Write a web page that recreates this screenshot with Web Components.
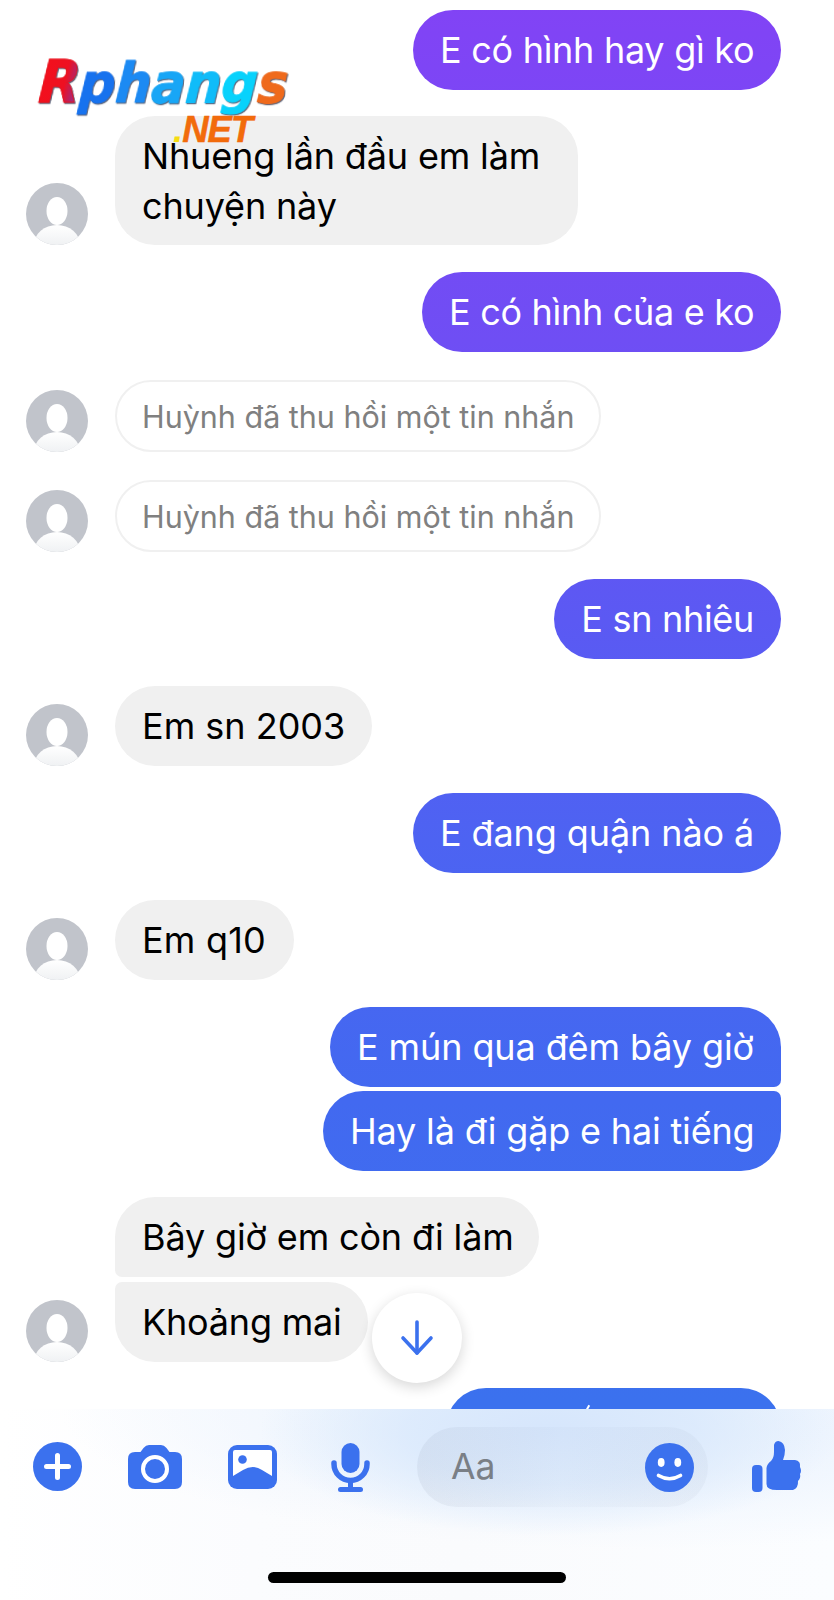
<!DOCTYPE html>
<html lang="vi">
<head>
<meta charset="utf-8">
<title>Messenger</title>
<style>
html,body{margin:0;padding:0;background:#fff}
body{width:834px;height:1600px;overflow:hidden;font-family:Inter,"Noto Sans",sans-serif}
</style>
</head>
<body>
<chat-screen>
  <chat-row side="out" top="10"><chat-bubble kind="out" w="368" ls="-.28">E có hình hay gì ko</chat-bubble></chat-row>
  <chat-row side="in" top="26" avatar><chat-bubble kind="in" w="463" style="padding-bottom:14px">Nhueng lần đầu em làm<br>chuyện này</chat-bubble></chat-row>
  <chat-row side="out" top="27"><chat-bubble kind="out" w="359" ls="-.3">E có hình của e ko</chat-bubble></chat-row>
  <chat-row side="in" top="28" avatar><chat-bubble kind="sys">Huỳnh đã thu hồi một tin nhắn</chat-bubble></chat-row>
  <chat-row side="in" top="28" avatar><chat-bubble kind="sys">Huỳnh đã thu hồi một tin nhắn</chat-bubble></chat-row>
  <chat-row side="out" top="27"><chat-bubble kind="out" w="227" ls="-.3">E sn nhiêu</chat-bubble></chat-row>
  <chat-row side="in" top="27" avatar><chat-bubble kind="in" w="257" ls="0">Em sn 2003</chat-bubble></chat-row>
  <chat-row side="out" top="27"><chat-bubble kind="out" w="368" ls="-.1">E đang quận nào á</chat-bubble></chat-row>
  <chat-row side="in" top="27" avatar><chat-bubble kind="in" w="179" ls=".2">Em q10</chat-bubble></chat-row>
  <chat-row side="out" top="26.5"><chat-bubble kind="out" w="451" corner="br" ls="-.1">E mún qua đêm bây giờ</chat-bubble></chat-row>
  <chat-row side="out" top="4.5"><chat-bubble kind="out" w="458" corner="tr" ls="-.17">Hay là đi gặp e hai tiếng</chat-bubble></chat-row>
  <chat-row side="in" top="26" spacer><chat-bubble kind="in" w="424" corner="bl" ls="-.15">Bây giờ em còn đi làm</chat-bubble></chat-row>
  <chat-row side="in" top="5" avatar><chat-bubble kind="in" w="253" corner="tl" ls="-.2">Khoảng mai</chat-bubble></chat-row>
  <chat-row side="out" top="26"><chat-bubble kind="out" w="335" tick></chat-bubble></chat-row>
  <scroll-button slot="over"></scroll-button>
  <site-logo slot="over"></site-logo>
  <chat-composer slot="over"></chat-composer>
</chat-screen>

<script>
function define(name, css, html, setup){
  customElements.define(name, class extends HTMLElement{
    constructor(){
      super();
      this.attachShadow({mode:'open'}).innerHTML = '<style>'+css+'</style>'+html;
    }
    connectedCallback(){ if(setup) setup(this, this.shadowRoot); }
  });
}

define('chat-screen',
  ':host{display:block;position:relative;width:834px;height:1600px;overflow:hidden;background:#fff}'+
  '.list{display:flex;flex-direction:column}',
  '<div class="list"><slot></slot></div><slot name="over"></slot>');

define('chat-row',
  ':host{display:flex;align-items:flex-end;flex:none}'+
  ':host([side=out]){justify-content:flex-end;padding-right:53px}'+
  ':host([side=in]){justify-content:flex-start;padding-left:26px}'+
  '.slot{flex:none;width:62px;margin-right:27px;display:none}'+
  ':host([avatar]) .slot,:host([spacer]) .slot{display:block}',
  '<div class="slot"></div><slot></slot>',
  function(h, s){
    h.style.marginTop = (h.getAttribute('top')||0)+'px';
    if(h.hasAttribute('avatar')){
      s.querySelector('.slot').appendChild(document.createElement('chat-avatar'));
    }
  });

define('chat-avatar',
  ':host{display:block;width:62px;height:62px}svg{display:block}',
  '<svg width="62" height="62" viewBox="0 0 62 62"><defs><linearGradient id="b" x1="0" y1="0" x2="0" y2="1"><stop offset="0" stop-color="#fff"/><stop offset=".55" stop-color="#eef0f2"/><stop offset="1" stop-color="#e6e8eb"/></linearGradient><clipPath id="c"><circle cx="31" cy="31" r="31"/></clipPath></defs><g clip-path="url(#c)"><rect width="62" height="62" fill="#c1c4cb"/><ellipse cx="31" cy="28" rx="10.500" ry="14" fill="#fff"/><ellipse cx="31" cy="62" rx="23" ry="20" fill="url(#b)"/></g></svg>');

define('chat-bubble',
  ':host{display:block;box-sizing:border-box;flex:none;padding:15px 27px;border-radius:40px;font:400 36px/50px Inter,"Noto Sans",sans-serif;letter-spacing:-.15px;white-space:nowrap}'+
  ':host([kind=out]){color:#fff;text-align:right;background:linear-gradient(180deg,#8243f5 0,#7c46f5 100px,#6f4ef4 340px,#5b59f3 620px,#4d63f2 840px,#4269f0 1100px,#3b71ee 1400px) fixed}'+
  ':host([kind=in]){color:#000;background:#f0f0f0}'+
  ':host([kind=sys]){color:#808080;background:#fff;border:2px solid #f0f0f0;width:486px;height:72px;padding:0 0 0 25px;border-radius:36px;font-size:30.5px;line-height:70px;letter-spacing:0}'+
  ':host([corner=br]){border-bottom-right-radius:7px}'+
  ':host([corner=tr]){border-top-right-radius:7px}'+
  ':host([corner=bl]){border-bottom-left-radius:7px}'+
  ':host([corner=tl]){border-top-left-radius:7px}'+
  '.tick{display:none;position:absolute;left:141px;top:17px;width:2px;height:5px;background:#fff;transform:rotate(30deg)}'+
  ':host([tick]){position:relative;height:80px}:host([tick]) .tick{display:block}',
  '<slot></slot><i class="tick"></i>',
  function(h){
    if(h.hasAttribute('w')) h.style.width = h.getAttribute('w')+'px';
    if(h.hasAttribute('ls')) h.style.letterSpacing = h.getAttribute('ls')+'px';
  });

define('scroll-button',
  ':host{position:absolute;left:372px;top:1293px;width:90px;height:90px;border-radius:50%;background:#fff;box-shadow:0 4px 14px rgba(0,0,0,.16);display:flex;align-items:center;justify-content:center}svg{display:block}',
  '<svg width="34" height="36" viewBox="0 0 34 36" fill="none" stroke="#3b71ee" stroke-width="3.600" stroke-linecap="round" stroke-linejoin="round"><path d="M17 2V33"/><path d="M3 18L17 33L31 18"/></svg>');

define('site-logo',
  ':host{position:absolute;left:39px;top:50px;width:270px;height:105px;display:block;pointer-events:none}'+
  '.top{display:block;transform-origin:0 50%;transform:skewX(-4deg) scaleY(1.08);font:italic 700 50.5px/66px "DejaVu Sans",sans-serif;white-space:nowrap;-webkit-text-stroke:.9px currentColor;filter:drop-shadow(1px 1px 0 rgba(30,40,70,.7))}'+
  '.r{color:transparent;-webkit-text-stroke:.9px #e8141f;background:linear-gradient(100deg,#f40f1a 0,#ee1022 60%,#6a3cc0 100%);-webkit-background-clip:text;background-clip:text;font-size:54px;letter-spacing:-1px}'+
  '.p{color:#1772ee}.h{color:#1c8af3}.a{color:#18a6f6}.n{color:#10bcf9}.g{color:#08d2fc}.s{color:#ef6a1c}'+
  '.net{display:block;position:absolute;left:134px;top:58px;font:italic 700 36.500px/44px "Liberation Sans",sans-serif;letter-spacing:-1px;color:#f26b0c;-webkit-text-stroke:.5px #f26b0c}'+
  '.net b{color:#f6dc12;-webkit-text-stroke:0;font-weight:700}',
  '<span class="top"><span class="r">R</span><span class="p">p</span><span class="h">h</span><span class="a">a</span><span class="n">n</span><span class="g">g</span><span class="s">s</span></span><span class="net"><b>.</b>NET</span>');

define('chat-composer',
  ':host{position:absolute;left:0;right:0;bottom:0;height:191px;display:block;background:radial-gradient(ellipse 290px 105px at 550px 22px,#d6e6fc 0,rgba(216,232,252,.75) 50%,rgba(230,240,253,0) 100%),radial-gradient(ellipse 580px 140px at 640px 0,#e8f1fd 0,rgba(238,245,254,.7) 60%,rgba(245,249,254,0) 100%),linear-gradient(90deg,#fff 0,#fbfcfe 30%,#fafbfd 55%,#fbfdff 100%)}'+
  '.row{display:flex;align-items:flex-start;padding-left:33px;height:100px}'+
  'svg{display:block;flex:none}'+
  '.plus{margin-top:33px}.cam{margin:36px 0 0 46px}.pic{margin:36px 0 0 46px}.mic{margin:34px 0 0 54px}'+
  '.pill{margin:18px 0 0 47px;flex:none;box-sizing:border-box;width:291px;height:80px;border-radius:40px;background:linear-gradient(90deg,rgba(70,80,110,.07),rgba(70,80,110,.02) 50%,rgba(70,80,110,.045));display:flex;align-items:center;justify-content:space-between;padding:0 14px 0 34px}'+
  '.aa{font:400 35.500px/1 Inter,"Noto Sans",sans-serif;color:#7a7f86}'+
  '.thumb{margin:32px 0 0 44px}'+
  '.home{position:absolute;left:268px;top:163px;width:298px;height:11px;border-radius:6px;background:#000}',
  '<div class="row">'+
  '<svg class="plus" width="49" height="49" viewBox="0 0 49 49"><circle cx="24.500" cy="24.500" r="24.500" fill="#3b71ee"/><path d="M24.500 13.500V35.500M13.500 24.500H35.500" stroke="#fff" stroke-width="5" stroke-linecap="round"/></svg>'+
  '<svg class="cam" width="54" height="44" viewBox="0 0 54 44"><path d="M7 7H12.500L15.500 3Q18 0 21 0H33Q36 0 38.500 3L41.500 7H47Q54 7 54 14V37Q54 44 47 44H7Q0 44 0 37V14Q0 7 7 7Z" fill="#3b71ee"/><circle cx="27" cy="24" r="12" fill="#3b71ee" stroke="#fff" stroke-width="4"/></svg>'+
  '<svg class="pic" width="49" height="44" viewBox="0 0 49 44"><rect width="49" height="44" rx="9" fill="#3b71ee"/><path d="M5 7Q5 5 7 5H42Q44 5 44 7V31L34 25Q25 19 15 25L5 31Z" fill="#fff"/><circle cx="14.500" cy="14.500" r="4.300" fill="#3b71ee"/></svg>'+
  '<svg class="mic" width="39" height="49" viewBox="0 0 39 49"><rect x="10.500" y="0" width="18" height="30" rx="9" fill="#3b71ee"/><path d="M3 20V21A16.500 16.500 0 0 0 36 21V20" fill="none" stroke="#3b71ee" stroke-width="5.500" stroke-linecap="round"/><path d="M19.500 38V46" stroke="#3b71ee" stroke-width="5"/><rect x="7" y="44" width="25" height="5" rx="2.500" fill="#3b71ee"/></svg>'+
  '<div class="pill"><span class="aa">Aa</span><svg width="49" height="49" viewBox="0 0 49 49"><circle cx="24.500" cy="24.500" r="24.500" fill="#3b71ee"/><ellipse cx="16.200" cy="19.500" rx="3.400" ry="4.400" fill="#fff"/><ellipse cx="32.800" cy="19.500" rx="3.400" ry="4.400" fill="#fff"/><path d="M13.500 32.500Q24.500 39 35.500 32.500" fill="none" stroke="#fff" stroke-width="3.600" stroke-linecap="round"/></svg></div>'+
  '<svg class="thumb" width="50" height="51" viewBox="0 0 50 51"><rect x="0" y="24" width="10.500" height="27" rx="4" fill="#3b71ee"/><path d="M14.500 27Q15 23 19 20Q22 17 22 11V4Q23 0 26.500 0Q32.500 1 33 9Q33 14 31 19H43Q49 20 48 26Q50 30 48 33Q49 37 46 40Q46.500 47 41 49H25Q14.500 49 14.500 43Z" fill="#3b71ee"/></svg>'+
  '</div><div class="home"></div>');
</script>
</body>
</html>
